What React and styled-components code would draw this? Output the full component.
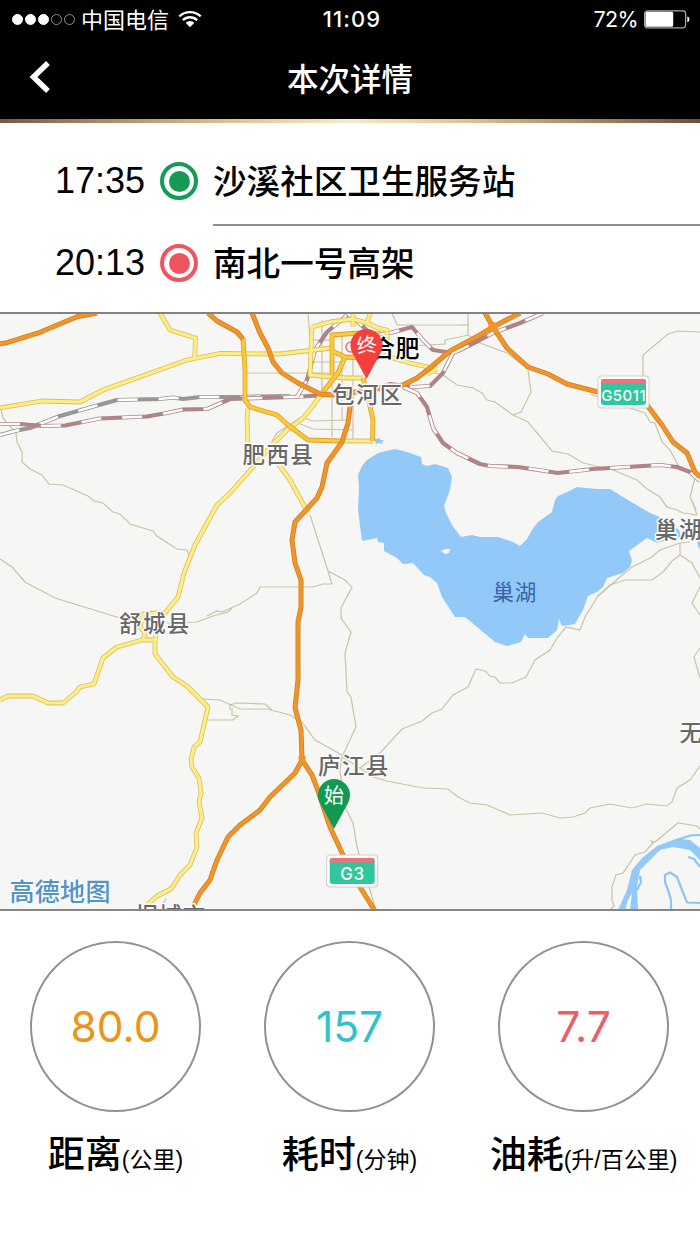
import React from "react";
import styled, { createGlobalStyle } from "styled-components";

const GlobalStyle = createGlobalStyle`
  * {
    box-sizing: border-box;
  }

  body {
    margin: 0;
    background: #fff;
    font-family: "Noto Sans CJK SC", sans-serif;
    color: #000;
  }
`;

const Page = styled.div`
  width: 700px;
  height: 1245px;
  overflow: hidden;
  display: flex;
  flex-direction: column;
  background: #fff;
`;

const Header = styled.header`
  height: 119px;
  background: #000;
  color: #fff;
`;

const StatusBar = styled.div`
  display: grid;
  grid-template-columns: 1fr auto 1fr;
  align-items: center;
  height: 38px;
  padding: 0 10px 0 12px;
`;

const StatusGroup = styled.div`
  display: flex;
  align-items: center;
  justify-content: ${props => (props.$end ? "flex-end" : "flex-start")};
`;

const SignalDots = styled.div`
  display: flex;
  gap: 2px;
  margin-right: 6px;
`;

const Dot = styled.span`
  width: 11px;
  height: 11px;
  border-radius: 50%;
  border: 1px solid ${props => (props.$on ? "#fff" : "#8d8d8d")};
  background: ${props => (props.$on ? "#fff" : "transparent")};
`;

const Carrier = styled.span`
  font-size: 22px;
  line-height: 36px;
  font-weight: 400;
  padding-bottom: 2px;
  margin-right: 9px;
`;

const Clock = styled.span`
  font-family: Inter, sans-serif;
  font-size: 22px;
  font-weight: 500;
  letter-spacing: 1.1px;
  line-height: 38px;
  padding-left: 2px;
`;

const Percent = styled.span`
  font-family: Inter, sans-serif;
  font-size: 21.5px;
  letter-spacing: -0.6px;
  line-height: 38px;
  margin-right: 6px;
`;

const NavBar = styled.div`
  display: grid;
  grid-template-columns: 80px 1fr 80px;
  align-items: center;
  height: 81px;
`;

const BackButton = styled.button`
  border: 0;
  background: none;
  padding: 0 0 5px 28px;
  height: 81px;
  display: flex;
  align-items: center;
`;

const Title = styled.h1`
  margin: 0;
  text-align: center;
  font-size: 31.5px;
  font-weight: 500;
  line-height: 79px;
  height: 83px;
`;

const GoldLine = styled.div`
  height: 4px;
  background: linear-gradient(
    to right,
    #7c5744 0%,
    #b08a62 15%,
    #dfc387 33%,
    #f5ecc8 50%,
    #dfc387 67%,
    #a9825b 85%,
    #6f4c3b 100%
  );
`;

const Route = styled.section`
  height: 189px;
  padding-top: 20px;
`;

const Stop = styled.div`
  display: grid;
  grid-template-columns: 160px 38px 1fr;
  height: 82px;
`;

const StopTime = styled.span`
  font-family: "Liberation Sans", sans-serif;
  font-size: 36px;
  line-height: 76px;
  padding-right: 15px;
  text-align: right;
`;

const StopMark = styled.span`
  width: 38px;
  height: 38px;
  margin-top: 19px;
  border-radius: 50%;
  border: 4px solid ${props => props.$color};
  background: ${props => props.$color};
  background-clip: content-box;
  padding: 4.5px;
`;

const StopName = styled.span`
  height: 83px;
  margin-left: 15px;
  font-size: 33.6px;
  font-weight: 500;
  line-height: 73px;
  border-bottom: ${props => (props.$last ? "0" : "2px solid #8f8f8f")};
`;

const MapPanel = styled.section`
  height: 599px;
  border-top: 2px solid #828282;
  border-bottom: 2px solid #868686;
  background: #f6f6f5;
`;

const MapCanvas = styled.svg`
  display: block;
  width: 700px;
  height: 595px;
  overflow: hidden;
`;

const Place = styled.text`
  font-size: ${props => props.$size || 22.5}px;
  letter-spacing: ${props => props.$gap ?? 1.4}px;
  font-weight: ${props => props.$weight || 500};
  fill: ${props => props.$color || "#686868"};
  stroke: ${props => props.$halo || "#fbfbfa"};
  stroke-width: 3px;
  stroke-linejoin: round;
  paint-order: stroke;
`;

const PinText = styled.text`
  font-size: 20px;
  font-weight: 400;
  fill: #fff;
  text-anchor: middle;
`;

const ShieldText = styled.text`
  font-family: Inter, sans-serif;
  font-size: ${props => props.$size}px;
  font-weight: 500;
  letter-spacing: 0.5px;
  fill: #fff;
  text-anchor: middle;
`;

const Stats = styled.section`
  display: grid;
  grid-template-columns: repeat(3, 234px);
  justify-content: center;
  padding: 30px 1px 0 0;
`;

const Stat = styled.div`
  display: flex;
  flex-direction: column;
  align-items: center;
`;

const StatCircle = styled.div`
  width: 171px;
  height: 171px;
  border: 2px solid #919191;
  border-radius: 50%;
  display: flex;
  align-items: center;
  justify-content: center;
  font-family: Inter, sans-serif;
  font-size: 42.5px;
  font-weight: 400;
  color: ${props => props.$color};
`;

const StatLabel = styled.div`
  height: 80px;
  line-height: 80px;
  font-size: 37px;
  font-weight: 500;
  white-space: nowrap;
`;

const Unit = styled.small`
  font-family: "Liberation Sans", "Noto Sans CJK SC", sans-serif;
  font-size: 23px;
  font-weight: 400;
`;

const stops = [
  { time: "17:35", name: "沙溪社区卫生服务站", color: "#149c55" },
  { time: "20:13", name: "南北一号高架", color: "#f0545f" }
];

const stats = [
  { value: "80.0", label: "距离", unit: "(公里)", color: "#ea9518" },
  { value: "157", label: "耗时", unit: "(分钟)", color: "#2fc3d0" },
  { value: "7.7", label: "油耗", unit: "(升/百公里)", color: "#ea6068" }
];

const lanes = [
  "1,410 3,418 16,433 17,442 22,452 22,462 30,469 42,475 49,484 63,485 88,496 94,501 103,503 113,512 120,514 130,524 153,531 157,536 177,549 187,550 189,555",
  "0,559 12,567 25,582 55,598 120,618",
  "167,623 197,622 213,616 228,612 232,608",
  "207,616 217,611 222,612 240,604 257,593 260,587 313,587 323,584 332,584 328,571 310,515",
  "328,571 345,580 352,587 341,608 341,618 351,632 345,653 347,692 351,697 356,727 342,757 340,770 345,807 353,823 357,847 375,907",
  "203,699 220,700 240,709 267,709 290,715 302,722 315,740 342,755",
  "230,710 230,705 237,703 265,704 272,710",
  "207,720 233,720 238,716 232,715 232,708",
  "342,757 360,768 380,753 402,729 422,721 432,713 442,709 453,695 468,687 476,669 485,671 490,676 495,677 500,683 512,683 526,677 535,660 550,650 557,638 566,627 580,630 585,617 598,596 620,577 632,567 652,557 660,550 680,543 690,542",
  "598,596 610,585 625,580 652,580 663,572 672,561 680,555 692,563 700,578",
  "680,543 680,555",
  "700,587 692,603 700,615",
  "700,648 694,657 700,678",
  "662,500 667,507 677,510 683,513 697,515",
  "692,500 697,515",
  "360,768 373,777 387,781 423,788 448,789 458,797 470,803 487,805 510,815 542,813 560,818 573,817 585,813 590,808 610,804 632,808 647,804 667,806 672,802 677,788 690,780 700,766",
  "610,910 614,906 612,900 612,887 616,875 623,873 635,855 645,852 653,843 651,841 655,842 678,823 697,826 700,829",
  "643,377 643,355 668,334 678,331 700,332",
  "528,370 531,392 521,412 513,415",
  "430,372 443,375 457,385 473,388 482,393 487,400 495,402 513,415 528,422 552,451 568,454 583,463 613,470 637,480 647,489 660,497 667,507",
  "590,394 630,408 645,413 650,422 655,423 662,442 670,450 678,465",
  "695,478 690,497 696,510",
  "468,313 468,335 480,343 507,353 528,369",
  "460,337 468,335",
  "460,325 468,325",
  "392,313 397,325 460,325",
  "410,346 445,344 445,340 460,337",
  "247,373 332,373 332,437",
  "308,313 311,350",
  "322,320 322,395",
  "342,335 342,420",
  "353,343 353,440",
  "311,340 332,340",
  "311,362 345,362",
  "308,410 302,417 277,433 272,441",
  "302,417 312,421 348,420",
  "300,424 313,429 353,430",
  "365,335 395,345",
  "166,899 162,905 168,909"
];

const yellowRoads = [
  "160,313 170,330 195.5,338 194.7,358",
  "0,408 41.5,401 80,402 103,390 187,360 220,353.5 280,354 310,350.5 332,348",
  "248,408 247,420 248,443 256,452",
  "345,357 338,373 323,392 312,407 303,418 287,430 270,447 253,467 230,493 217,505 195,545 184,573 178,597 165,613",
  "277,462 290,480 308,513",
  "312,327 330,322 353,319 367,323 378,328 387,330 387,340",
  "312,327 311,350 310,375 333,377 347,378 363,378",
  "353,313 353,327",
  "370,313 367,323",
  "340,441 373,441",
  "383,355 393,358 410,363 437,369",
  "437,369 428,374",
  "165,613 157,613 143,614 140,627 145,633 143,640",
  "165,613 158,625 155,640",
  "155,640 142,640 117,647 103,658 94,684 80,687 76,692 63,703 48,703 33,696 8,696 0,700",
  "155,640 155,654 173,677 187,686 208,707 200,742 194,747 191,760 192,767 199,778 201,793 199,802 202,818 196,833 197,847 190,865 180,875 171,889 157,896 147,905"
];

const goldRoads = [
  "243,338 245,370 245,400 250,407 277,415 288,425 308,440 340,441",
  "345,357 338,373 323,392",
  "332,375 332,335 360,333 380,334",
  "332,351 345,357 363,358",
  "363,378 368,397 373,420 372.5,441"
];

const highways = [
  "0,343.7 7,342.7 40,332.3 77,316.7 97,313",
  "208,313 217,321 237,332 243,339",
  "252,313 260,333 268,348 273,362 282,373 298,383 320,394 333,395 370,390 403,385 417,378 430,368 450,351 480,335 493,327 520,313",
  "485,313 493,327 507,348 528,367 548,374 567,384 598,392 627,398 647,405 662,425 673,442 687,453 695,472 700,477",
  "350,390 350,407 348,423 342,442 327,463 322,487 317,498 295,522 292,540 295,563 301,580 301,607 298,622 298,680 295,708 301,730 302,760 312,775 317,788 330,827 343,855 360,887 375,911",
  "302,760 295,773 270,797 260,810 240,825 228,837 217,860 210,880 200,893 194,905"
];

const greyRails = [
  "0,435 17,430.5 30,428 40,424 60,416 97,405.5 117,400 160,399 173,397.5 183,399 200,397 240,397 290,396"
];

const pinkRails = [
  "0,424 20,424 43,426 65,425.5 100,418.5 147,416.5 167,413 183,409.5 207,409 230,399 293,397 327,395",
  "347,313 345,317 327,332 315,350 307,380 297,397",
  "347,313 358,322 372,335 390,333 412,327 423,340 433,350 453,353 460,350 480,340 493,333 520,323 543,313",
  "453,353 443,373 430,386 413,387 390,384 378,388",
  "403,387 417,393 427,407 433,428 443,443 457,453 480,464 490,466 518,467 558,473 593,469 660,465 677,467 690,472 700,481"
];

const lake =
  "358,510 359,487 358,475 362,466 367,460 378,453 395,449 407,452 421,457 422,464 427,466 435,464 448,468 452,477 450,490 444,506 446,513 452,525 461,537 472,535 480,537 498,537 513,542 520,546 527,539 532,530 538,522 552,512 555,500 558,496 567,492 577,487 597,489 610,489 623,497 650,513 667,520 682,537 668,540 657,543 647,538 629,551 632,560 630,567 623,573 607,578 603,587 597,592 588,596 583,610 575,624 562,626 559,619 557,630 548,638 528,638 525,634 521,642 507,646 495,642 477,627 465,617 455,617 442,597 437,583 430,577 424,575 413,563 403,564 397,558 384,551 384,543 378,542 377,538 362,541";

function Roads({ lines, edge, fill, width }) {
  return (
    <g fill="none" strokeLinejoin="round">
      {lines.map(l => (
        <polyline key={"e" + l} points={l} stroke={edge} strokeWidth={width} />
      ))}
      {lines.map(l => (
        <polyline key={l} points={l} stroke={fill} strokeWidth={width - 1.6} />
      ))}
    </g>
  );
}

function Rails({ lines, color }) {
  return (
    <g fill="none" strokeLinejoin="round">
      {lines.map(l => (
        <g key={l}>
          <polyline points={l} stroke={color} strokeWidth="4.2" />
          <polyline
            points={l}
            stroke="#fff"
            strokeWidth="2.5"
            strokeDasharray="20 21"
          />
        </g>
      ))}
    </g>
  );
}

function Shield({ x, y, size, children }) {
  return (
    <g transform={`translate(${x} ${y})`}>
      <rect x="-0.5" y="-0.5" width="52" height="33" rx="4" fill="#cfcfcf" />
      <rect x="0.5" y="0.5" width="50" height="31" rx="3.5" fill="#fff" />
      <rect x="3" y="3" width="45" height="26" rx="3" fill="#2fc79d" />
      <path d="M3 7.5V6a3 3 0 0 1 3-3h39a3 3 0 0 1 3 3v1.5z" fill="#f2707a" />
      <ShieldText x="25.7" y="24.7" $size={size}>
        {children}
      </ShieldText>
    </g>
  );
}

function Pin({ x, y, color, tilt, children }) {
  return (
    <g transform={`translate(${x} ${y})`}>
      <path
        d="M0 0L-13.5-25C-15.2-28-16-31-16-34A16 16 0 0 1 16-34C16-31 15.2-28 13.5-25Z"
        fill={color}
      />
      <PinText y="-26.5" transform={`rotate(${tilt || 0} 0 -34)`}>
        {children}
      </PinText>
    </g>
  );
}

function TripMap() {
  return (
    <MapCanvas viewBox="0 314 700 595">
      <polygon points={lake} fill="#93c9f9" />
      <path d="M441 551l4-2 5 0-1 4-4 1z" fill="#f6f6f5" />
      <path
        d="M374 438l3 1 2-1 2 2 3 0-2 2 1 2-4-1-3 1z"
        fill="#93c9f9"
      />
      <path d="M673 526l6 4 2 6-7-3zM697 541l3-1v10l-2-4z" fill="#93c9f9" />

      {/* river bend */}
      <path
        d="M618 910L627 890 632 870 642 858 657 846 677 838.5 690 840 700 848V860L690 850 673 847 660 850 650 860 640 870 637 887 638 910H630L632 893 628 900 625 910Z"
        fill="#93c9f9"
      />
      <path
        d="M677 840L690 835.5 700 835M688 857L694 859 700 867M671 910V900L668 890 665 882 665 875 670 872.5 677 877 682 890 687 902.5 700 903M640 876L641 882 637 890"
        fill="none"
        stroke="#8ac5f8"
        strokeWidth="2.2"
      />

      <g fill="none" stroke="#c9c4a4" strokeWidth="1.2">
        {lanes.map(l => (
          <polyline key={l} points={l} />
        ))}
      </g>
      <Rails lines={greyRails} color="#979797" />
      <Rails lines={pinkRails} color="#b08388" />
      <Roads lines={yellowRoads} edge="#d9bd62" fill="#fdee84" width={4.8} />
      <Roads lines={goldRoads} edge="#dba02c" fill="#fcc938" width={4.8} />
      <Roads lines={highways} edge="#cf8020" fill="#f3942a" width={5} />
      <circle cx="302" cy="758" r="3.6" fill="#ee9128" />
      <circle cx="493" cy="327" r="5" fill="#f3942a" />

      <circle cx="351" cy="347" r="5" fill="#fff" stroke="#ee7777" strokeWidth="1.6" />
      <Place x="371" y="357" $size={24} $gap={0.4} $color="#000">
        合肥
      </Place>
      <Place x="332" y="402.5">包河区</Place>
      <Place x="242.5" y="462.5">肥西县</Place>
      <Place x="655" y="538">巢湖</Place>
      <Place x="492.5" y="600" $size={21.5} $gap={0.8} $weight={400} $color="#3b63a8" $halo="#93c9f9">
        巢湖
      </Place>
      <Place x="119" y="632">舒城县</Place>
      <Place x="318" y="774">庐江县</Place>
      <Place x="679.5" y="741">无为</Place>
      <Place x="135" y="924">桐城市</Place>
      <Place x="9.5" y="900.5" $size={25} $gap={0.3} $color="#4f94ca">
        高德地图
      </Place>

      <Shield x={598} y={376} size={15}>G5011</Shield>
      <Shield x={326.7} y={855} size={17}>G3</Shield>
      <Pin x={366.5} y={379} color="#f4403c" tilt={-8}>终</Pin>
      <Pin x={334} y={829} color="#129a54">始</Pin>
    </MapCanvas>
  );
}

function WifiIcon() {
  return (
    <svg width="24" height="18" viewBox="0 0 24 18">
      <path
        d="M1.3 6.3A15.6 15.6 0 0 1 22.7 6.3M4.8 10.1A10.5 10.5 0 0 1 19.2 10.1"
        fill="none"
        stroke="#fff"
        strokeWidth="2.3"
      />
      <path d="M7.6 12.7A6.4 6.4 0 0 1 16.4 12.7L12 17.2Z" fill="#fff" />
    </svg>
  );
}

function BatteryIcon() {
  return (
    <svg width="46" height="19" viewBox="0 0 46 19">
      <rect x="0.6" y="0.8" width="41" height="17" rx="2.8" fill="none" stroke="#a9a9a9" strokeWidth="1.2" />
      <rect x="1.5" y="1.8" width="27.7" height="15" rx="1.5" fill="#fff" />
      <path d="M43.3 6.5C46 7 46 11.6 43.3 12.2Z" fill="#fff" />
    </svg>
  );
}

const App = () => {
  return (
    <Page>
      <GlobalStyle />
      <Header>
        <StatusBar>
          <StatusGroup>
            <SignalDots>
              {[1, 2, 3, 4, 5].map(n => (
                <Dot key={n} $on={n <= 3} />
              ))}
            </SignalDots>
            <Carrier>中国电信</Carrier>
            <WifiIcon />
          </StatusGroup>
          <Clock>11:09</Clock>
          <StatusGroup $end>
            <Percent>72%</Percent>
            <BatteryIcon />
          </StatusGroup>
        </StatusBar>
        <NavBar>
          <BackButton aria-label="返回">
            <svg width="22" height="32" viewBox="0 0 22 32">
              <path d="M20 2L5.5 16L20 30" fill="none" stroke="#fff" strokeWidth="5.5" />
            </svg>
          </BackButton>
          <Title>本次详情</Title>
        </NavBar>
      </Header>
      <GoldLine />
      <Route>
        {stops.map((s, i) => (
          <Stop key={s.time}>
            <StopTime>{s.time}</StopTime>
            <StopMark $color={s.color} />
            <StopName $last={i === stops.length - 1}>{s.name}</StopName>
          </Stop>
        ))}
      </Route>
      <MapPanel>
        <TripMap />
      </MapPanel>
      <Stats>
        {stats.map(s => (
          <Stat key={s.label}>
            <StatCircle $color={s.color}>{s.value}</StatCircle>
            <StatLabel>
              {s.label}
              <Unit>{s.unit}</Unit>
            </StatLabel>
          </Stat>
        ))}
      </Stats>
    </Page>
  );
};

export default App;
